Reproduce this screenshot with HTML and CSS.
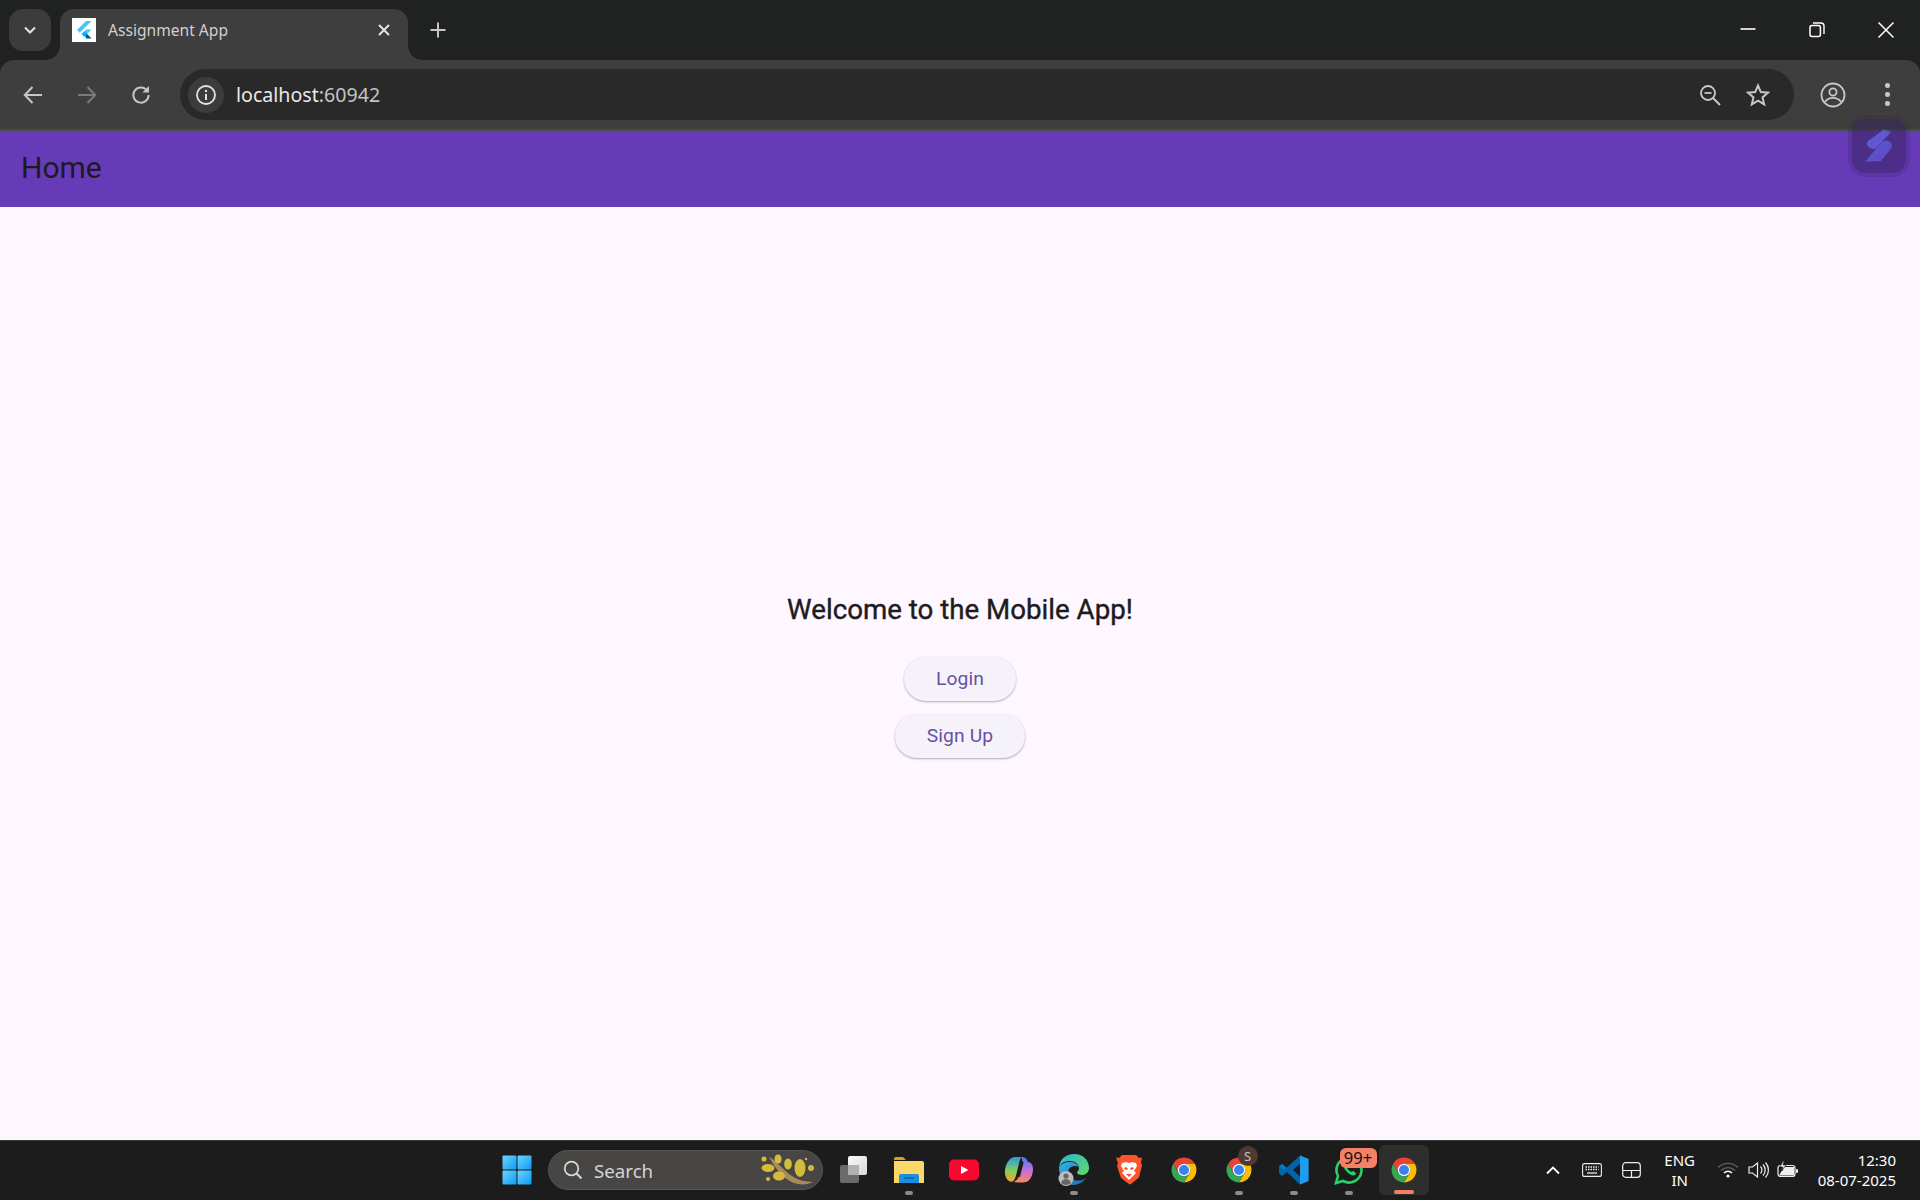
FILE: index.html
```html
<!DOCTYPE html>
<html lang="en">
<head>
<meta charset="utf-8">
<title>Assignment App</title>
<link rel="stylesheet" href="styles.css">
</head>
<body>
<svg class="defs" width="0" height="0" aria-hidden="true">
  <defs>
    <symbol id="chrome" viewBox="0 0 48 48">
      <path fill="#ea4335" d="M24 4A20 20 0 0 1 41.32 14H24A10 10 0 0 0 15.34 29L6.68 14A20 20 0 0 1 24 4Z"/>
      <path fill="#fbbc04" d="M41.32 14A20 20 0 0 1 24 44L32.66 29A10 10 0 0 0 24 14H41.32Z"/>
      <path fill="#34a853" d="M6.68 14A20 20 0 0 0 24 44L32.66 29A10 10 0 0 1 15.34 29Z"/>
      <circle cx="24" cy="24" r="10" fill="#fff"/>
      <circle cx="24" cy="24" r="8" fill="#3b82f0"/>
    </symbol>
    <linearGradient id="win" x1="0" y1="0" x2="1" y2="1">
      <stop offset="0" stop-color="#6fd3fb"/><stop offset="1" stop-color="#0a9bf5"/>
    </linearGradient>
    <linearGradient id="tv" x1="0" y1="0" x2="1" y2="1">
      <stop offset="0" stop-color="#fafafa"/><stop offset="1" stop-color="#d8d8d8"/>
    </linearGradient>
    <linearGradient id="edge" x1="0" y1="0" x2="1" y2="1">
      <stop offset="0" stop-color="#36b4e4"/><stop offset="1" stop-color="#1469b8"/>
    </linearGradient>
    <linearGradient id="edge2" x1="0" y1="0" x2="1" y2="1">
      <stop offset="0" stop-color="#2bb4d8"/><stop offset="1" stop-color="#62dc62"/>
    </linearGradient>
    <linearGradient id="cop1" x1="0" y1="0" x2="0" y2="1">
      <stop offset="0" stop-color="#2b9ae8"/><stop offset=".55" stop-color="#7fd05a"/><stop offset="1" stop-color="#f8a22e"/>
    </linearGradient>
    <linearGradient id="cop2" x1="0" y1="0" x2="0" y2="1">
      <stop offset="0" stop-color="#3f7ff0"/><stop offset=".5" stop-color="#c06ee0"/><stop offset="1" stop-color="#f88a5a"/>
    </linearGradient>
    <linearGradient id="s1" x1="0" y1="0" x2="1" y2="1">
      <stop offset="0" stop-color="#5560d8"/><stop offset="1" stop-color="#6a4fcf"/>
    </linearGradient>
  </defs>
</svg>

<header class="browser">
  <div class="tabstrip">
    <button class="tabsearch">
      <svg width="16" height="16" viewBox="0 0 16 16"><path d="M3 5.500 8 10.500 13 5.500" fill="none" stroke="#e3e3e3" stroke-width="2"/></svg>
    </button>
    <div class="tab">
      <span class="favicon">
        <svg width="24" height="24" viewBox="0 0 24 24">
          <path fill="#47c5fb" d="M14 3 5 12l2.700 2.700L19.500 3Z"/>
          <path fill="#47c5fb" d="M19.500 11.500h-5.400L9.700 16l2.700 2.700Z"/>
          <path fill="#00569e" d="m12.400 15.400 2-.1 5.200 5.200h-5.400Z"/>
          <path fill="#00b5f8" d="M9.700 16l2.700-2.700 2.700 2.700-2.700 2.700Z"/>
        </svg>
      </span>
      <span class="tabtitle">Assignment App</span>
      <svg class="tabclose" width="14" height="14" viewBox="0 0 14 14"><path d="M2 2 12 12M12 2 2 12" stroke="#e3e3e3" stroke-width="2"/></svg>
    </div>
    <svg class="newtab" width="18" height="18" viewBox="0 0 18 18"><path d="M9 1.500v15M1.500 9h15" stroke="#c7c7c7" stroke-width="2"/></svg>
    <div class="winctl">
      <span class="winbtn"><svg width="16" height="16" viewBox="0 0 16 16"><path d="M.5 7h15" stroke="#fff" stroke-width="1.600"/></svg></span>
      <span class="winbtn"><svg width="16" height="16" viewBox="0 0 16 16"><rect x="1" y="3.600" width="10.400" height="11" rx="2" fill="none" stroke="#fff" stroke-width="1.500"/><path d="M4 1h8a3 3 0 0 1 3 3v8" fill="none" stroke="#fff" stroke-width="1.400"/></svg></span>
      <span class="winbtn"><svg width="16" height="16" viewBox="0 0 16 16"><path d="M.5.500l15 15M15.500.500l-15 15" stroke="#fff" stroke-width="1.500"/></svg></span>
    </div>
  </div>
  <div class="toolbar">
    <span class="navbtn"><svg width="22" height="22" viewBox="0 0 22 22"><path d="M20 11H3M10.500 3 2.800 11l7.700 8" fill="none" stroke="#c7c7c7" stroke-width="2"/></svg></span>
    <span class="navbtn"><svg width="22" height="22" viewBox="0 0 22 22"><path d="M2 11h17M11.500 3l7.700 8-7.700 8" fill="none" stroke="#7a7a7a" stroke-width="2"/></svg></span>
    <span class="navbtn"><svg width="22" height="22" viewBox="0 0 22 22"><path d="M18.600 11a7.600 7.600 0 1 1-2.300-5.400" fill="none" stroke="#c7c7c7" stroke-width="2"/><path d="M19 2v6.500h-6.500Z" fill="#c7c7c7"/></svg></span>
    <div class="omnibox">
      <span class="siteinfo"><svg width="22" height="22" viewBox="0 0 22 22"><circle cx="11" cy="11" r="9" fill="none" stroke="#e3e3e3" stroke-width="1.800"/><path d="M11 10v6" stroke="#e3e3e3" stroke-width="2"/><circle cx="11" cy="7" r="1.200" fill="#e3e3e3"/></svg></span>
      <span class="url">localhost<span class="port">:60942</span></span>
      <span class="omni-icons">
        <svg width="22" height="22" viewBox="0 0 22 22"><circle cx="9" cy="9" r="7" fill="none" stroke="#c7c7c7" stroke-width="1.800"/><path d="M5.500 9h7" stroke="#c7c7c7" stroke-width="1.800"/><path d="m14 14 7 7" stroke="#c7c7c7" stroke-width="2"/></svg>
        <svg width="24" height="24" viewBox="0 0 24 24"><path d="m12 2.500 2.800 6.600 7.200.6-5.500 4.700 1.700 7-6.200-3.700-6.200 3.700 1.700-7L2 9.700l7.200-.6Z" fill="none" stroke="#c7c7c7" stroke-width="2"/></svg>
      </span>
    </div>
    <span class="account"><svg width="26" height="26" viewBox="0 0 26 26"><circle cx="13" cy="13" r="11.500" fill="none" stroke="#c7c7c7" stroke-width="1.800"/><circle cx="13" cy="10" r="3.600" fill="none" stroke="#c7c7c7" stroke-width="1.800"/><path d="M5 20c2-3.400 5-4.200 8-4.200s6 .8 8 4.200" fill="none" stroke="#c7c7c7" stroke-width="1.800"/></svg></span>
    <span class="menu"><i></i><i></i><i></i></span>
  </div>
</header>

<div class="appbar">
  <h1 class="apptitle">Home</h1>
</div>

<div class="widget">
  <svg width="28" height="36" viewBox="0 0 30 36">
    <path fill="#4f7f8f" opacity=".5" d="M19 0 28 2 24 8 16 4Z"/>
    <path fill="url(#s1)" d="M19 1.500 27.500 3 12.500 19.500c-2 2-5 2-7.500.5-3-2-3.800-5-1.500-7.500Z"/>
    <path fill="url(#s1)" d="M18 14c2.500-2.500 6-2.500 8.500-.5 3 2.300 3 5.500.8 8L17 34 0 35 18 14Z" opacity=".85"/>
  </svg>
</div>

<main class="page">
  <h2 class="welcome">Welcome to the Mobile App!</h2>
  <button class="pill">Login</button>
  <button class="pill">Sign Up</button>
</main>

<footer class="taskbar">
  <span class="start">
    <svg width="30" height="30" viewBox="0 0 30 30"><rect x="0.500" y="0.500" width="14" height="14" rx="1" fill="url(#win)"/><rect x="15.500" y="0.500" width="14" height="14" rx="1" fill="url(#win)"/><rect x="0.500" y="15.500" width="14" height="14" rx="1" fill="url(#win)"/><rect x="15.500" y="15.500" width="14" height="14" rx="1" fill="url(#win)"/></svg>
  </span>
  <div class="searchbox">
    <svg width="20" height="20" viewBox="0 0 20 20"><circle cx="8.500" cy="8.500" r="6.800" fill="none" stroke="#d8d8d8" stroke-width="1.800"/><path d="m13.500 13.500 5 5" stroke="#d8d8d8" stroke-width="2"/></svg>
    <span class="searchtext">Search</span>
    <svg class="branch" width="54" height="32" viewBox="0 0 54 32">
      <path d="M8 3c8 4 14 13 23 19s14 5 21 6c-6 3-13 3-19 1C22 25 14 14 8 3Z" fill="#a98a5e"/>
      <g fill="#d5bb3c">
        <ellipse cx="7" cy="14" rx="6.500" ry="4"/><ellipse cx="17" cy="5" rx="3.500" ry="4.500"/><ellipse cx="27" cy="10" rx="3.800" ry="5.500"/>
        <ellipse cx="39" cy="14" rx="5.500" ry="9"/><ellipse cx="18" cy="22" rx="6" ry="4.500"/><circle cx="50" cy="14" r="3"/><circle cx="7" cy="25" r="2"/><circle cx="3" cy="5" r="2.500"/><circle cx="45" cy="5" r="1.200"/>
      </g>
    </svg>
  </div>

  <div class="apps">
    <span class="app">
      <svg width="28" height="28" viewBox="0 0 28 28"><rect x="0" y="9" width="19" height="18" rx="2" fill="#6b6b6b"/><rect x="8" y="0" width="19" height="19" rx="2" fill="url(#tv)"/><rect x="8" y="9" width="11" height="10" fill="#b0b0b0"/></svg>
    </span>
    <span class="app on">
      <svg width="30" height="28" viewBox="0 0 30 28"><path d="M0 3a2 2 0 0 1 2-2h7l3 3h-12Z" fill="#d9a315"/><path d="M0 5h28a2 2 0 0 1 2 2v20H0Z" fill="#fcd769"/><path d="M5 27v-7a2 2 0 0 1 2-2h16a2 2 0 0 1 2 2v7Z" fill="#1a8fdc"/><path d="M10 22h10" stroke="#0b5aa5" stroke-width="1.500"/></svg>
    </span>
    <span class="app">
      <svg width="30" height="22" viewBox="0 0 30 22"><rect width="30" height="21" y="0.500" rx="5" fill="#f8072e"/><path d="m12 7 7.500 4-7.500 4Z" fill="#fff"/></svg>
    </span>
    <span class="app">
      <svg width="30" height="30" viewBox="0 0 30 30">
        <path fill="url(#cop2)" d="M18 2c3 0 5 2 6 5 3 0 5 3 5 7 0 6-3 12-7 13-2 .5-4 .5-7 .5l-6-.5c3-1 5-3 6-6l3-12c.5-3 0-5-.5-7Z"/>
        <path fill="url(#cop1)" d="M18 2h-7C6 2 2 8 1 15c-.5 5 1 10 5 11.500 3 1 5-2 6-6l3-12c.5-3 1-5 3-6.500Z"/>
        <path d="M18.500 7.500 15 21" fill="none" stroke="#1c1c1c" stroke-width="2.200" stroke-linecap="round"/>
      </svg>
    </span>
    <span class="app on">
      <svg width="32" height="34" viewBox="0 0 32 34">
        <path fill="url(#edge2)" d="M1 14C2 6 8 1 16 1c9 0 15 6 15 14 0 4-3 7-7 7-3 0-5-1-5-3 1-1 2-2 2-4 0-4-4-7-9-7-5 0-9 2-11 6Z"/>
        <path fill="url(#edge)" d="M1 14c2-3 6-5 11-5 4 0 8 2 9 5-4-2-8-1-10 2-2 4 0 9 5 11 3 1 8 1 12-2-3 4-7 7-13 7C7 32 1 25 1 14Z"/>
        <circle cx="8" cy="25.500" r="7.500" fill="#bdbdbd"/><circle cx="8" cy="23" r="2.600" fill="#666"/><path d="M3 30c1-3 3-4 5-4s4 1 5 4a7 7 0 0 1-10 0Z" fill="#666"/>
      </svg>
    </span>
    <span class="app">
      <svg width="26" height="30" viewBox="0 0 26 30"><path fill="#fb542b" d="M6 0h14l3 3 3-.5-1 5 1 3-3 12-8 6.500-1 .5-1-.5L5 23 1 11l1-3-2-5.500L3 3Z"/><path fill="#fff" d="M6 8 10 7l3 1 3-1 4 1 1 3-3 5 2 2-4 4-3 3-3-3-4-4 2-2-3-5Z"/><path fill="#fb542b" d="M9 12l3 1-1 2-3-1ZM17 12l-3 1 1 2 3-1ZM10 19h6l-3 3Z"/></svg>
    </span>
    <span class="app"><svg width="30" height="30"><use href="#chrome"/></svg></span>
    <span class="app on">
      <svg width="30" height="30"><use href="#chrome"/></svg>
      <span class="badge-s">S</span>
    </span>
    <span class="app on">
      <svg width="30" height="30" viewBox="0 0 30 30"><path fill="#0065a9" d="M21 .5 29.500 4v22L21 29.500 8 17l-5 4-3-2.500v-7L3 9l5 4Zm0 8-7 6.500 7 6.500Z"/><path fill="#1f9cf0" d="M21 .5 29.500 4v22L21 29.500Z"/><path fill="#007acc" d="M21 .5 8 13l-5-4-3 2.500 5 3.500 16-14.500Z"/></svg>
    </span>
    <span class="app on">
      <svg width="30" height="30" viewBox="0 0 30 30"><path d="M2 28l2-7A12.500 12.500 0 1 1 9 26Z" fill="none" stroke="#25d366" stroke-width="2.600"/><path d="M10 9c-1 2 0 5 3 8s6 4 8 3l1-2-3-2-1.500 1c-2-.5-4-3-4.500-4.500l1-1.500-2-3Z" fill="#25d366"/></svg>
      <span class="badge-n">99+</span>
    </span>
    <span class="app active"><svg width="30" height="30"><use href="#chrome"/></svg></span>
  </div>

  <div class="tray">
    <svg class="t-caret" width="16" height="10" viewBox="0 0 16 10"><path d="M2 8.500 8 2.500l6 6" fill="none" stroke="#fff" stroke-width="1.800"/></svg>
    <svg class="t-kbd" width="20" height="14" viewBox="0 0 20 14"><rect x=".6" y=".6" width="18.800" height="12.800" rx="2" fill="none" stroke="#eee" stroke-width="1.100"/><path d="M3.500 4h13M3.500 6.500h13" stroke="#eee" stroke-width="1.300" stroke-dasharray="1.500 1"/><path d="M5 10h10" stroke="#eee" stroke-width="1.300"/></svg>
    <svg class="t-pad" width="20" height="16" viewBox="0 0 20 16"><rect x=".7" y=".7" width="17.600" height="14.600" rx="3" fill="none" stroke="#eee" stroke-width="1.200"/><path d="M1 8.500h17M9.500 8.500v6.500" stroke="#eee" stroke-width="1.200"/></svg>
    <span class="lang">ENG<br>IN</span>
    <svg class="t-wifi" width="22" height="16" viewBox="0 0 22 16"><path d="M1 5.500a14 14 0 0 1 20 0M4 8.500a10 10 0 0 1 14 0" fill="none" stroke="#5e5e5e" stroke-width="1.300"/><path d="M7 11a5.500 5.500 0 0 1 8 0" fill="none" stroke="#fff" stroke-width="1.300"/><circle cx="11" cy="14" r="1.600" fill="#fff"/></svg>
    <svg class="t-vol" width="22" height="18" viewBox="0 0 22 18"><path d="M1 6h3.500L9.500 2v14l-5-4H1Z" fill="none" stroke="#eee" stroke-width="1.200"/><path d="M12.500 5.500a5 5 0 0 1 0 7M15 3.500a8 8 0 0 1 0 11M17.500 1.500a11 11 0 0 1 0 15" fill="none" stroke="#eee" stroke-width="1.200"/></svg>
    <svg class="t-bat" width="22" height="18" viewBox="0 0 22 18"><rect x="1" y="4.500" width="17" height="11" rx="2.500" fill="none" stroke="#eee" stroke-width="1.200"/><path d="M2 14.500 7 6h10v8.500Z" fill="#eee"/><rect x="19" y="8" width="2" height="4" rx="1" fill="#eee"/><path d="M6 0 3 6h3l-1 4 4-6H6l1-4Z" fill="#eee" stroke="#1c1c1c" stroke-width=".6"/></svg>
    <span class="clock">12:30<br>08-07-2025</span>
  </div>
</footer>
</body>
</html>
```

FILE: styles.css
```css
* { box-sizing: border-box; }
html, body { margin: 0; height: 100%; }
body {
  display: flex;
  flex-direction: column;
  height: 1200px;
  overflow: hidden;
  background: #fef7ff;
  font-family: "Noto Sans", "Open Sans", sans-serif;
  position: relative;
}
.defs { position: absolute; }

/* browser frame */
.browser { flex: none; background: #202221; }
.tabstrip {
  height: 60px;
  display: flex;
  align-items: flex-end;
  padding-left: 9px;
}
.tabsearch {
  width: 42px;
  height: 42px;
  margin-bottom: 9px;
  border: 0;
  padding: 0;
  border-radius: 14px;
  background: #3c3c3c;
  display: flex;
  align-items: center;
  justify-content: center;
}
.tab {
  position: relative;
  width: 348px;
  height: 51px;
  margin-left: 9px;
  padding: 0 17px 9px 12px;
  background: #3e3e3e;
  border-radius: 14px 14px 0 0;
  display: flex;
  align-items: center;
}
.tab::before, .tab::after {
  content: "";
  position: absolute;
  bottom: 0;
  width: 14px;
  height: 14px;
}
.tab::before { left: -14px; background: radial-gradient(circle at 0 0, transparent 13.5px, #3e3e3e 14px); }
.tab::after { right: -14px; background: radial-gradient(circle at 100% 0, transparent 13.5px, #3e3e3e 14px); }
.favicon {
  width: 24px;
  height: 24px;
  background: #fff;
  display: block;
  flex: none;
}
.favicon svg { display: block; }
.tabtitle {
  margin: 0 0 1px 12px;
  flex: 1;
  font-size: 15.600px;
  line-height: 22px;
  color: #d0d0d0;
  white-space: nowrap;
}
.tabclose { flex: none; }
.newtab { margin: 0 0 21px 21px; flex: none; }
.winctl {
  margin-left: auto;
  align-self: stretch;
  display: flex;
}
.winbtn {
  width: 69px;
  display: flex;
  align-items: center;
  justify-content: center;
}

.toolbar {
  height: 69px;
  background: #3e3e3e;
  border-radius: 14px 14px 0 0;
  display: flex;
  align-items: center;
  padding-left: 6px;
}
.navbtn {
  width: 54px;
  display: flex;
  align-items: center;
  justify-content: center;
  flex: none;
}
.omnibox {
  width: 1614px;
  margin-left: 12px;
  height: 51px;
  border-radius: 26px;
  background: #292929;
  display: flex;
  align-items: center;
  padding: 0 24px 0 8px;
  flex: none;
}
.siteinfo {
  width: 36px;
  height: 36px;
  border-radius: 50%;
  background: #3c3c3c;
  display: flex;
  align-items: center;
  justify-content: center;
}
.url {
  margin-left: 12px;
  font-size: 19.600px;
  color: #e8e8e8;
}
.port { color: #c4c4c4; }
.omni-icons {
  margin-left: auto;
  display: flex;
  align-items: center;
  gap: 25px;
}
.account {
  margin-left: 26px;
  display: flex;
}
.menu {
  margin-left: 39px;
  display: flex;
  flex-direction: column;
  gap: 4.500px;
}
.menu i {
  width: 4.500px;
  height: 4.500px;
  border-radius: 50%;
  background: #c7c7c7;
  display: block;
}

/* app */
.appbar {
  flex: none;
  height: 78px;
  background: #673ab7;
  border-top: 2px solid #4a4a4a;
  padding: 0 0 4px 21px;
  display: flex;
  align-items: center;
}
.apptitle {
  margin: 0;
  font: 400 30px "Roboto", sans-serif;
  color: #1d1b20;
}
.widget {
  position: absolute;
  left: 1848px;
  top: 115px;
  width: 62px;
  height: 62px;
  border-radius: 18px;
  background: rgba(50, 34, 90, .5);
  background-clip: padding-box;
  border: 4px solid rgba(50, 34, 90, .2);
  display: flex;
  align-items: center;
  justify-content: center;
}

.page {
  flex: 1;
  min-height: 0;
  padding-top: 2px;
  display: flex;
  flex-direction: column;
  align-items: center;
  justify-content: center;
}
.welcome {
  margin: 0 0 29px;
  font: 400 27.700px/36px "Roboto", sans-serif;
  -webkit-text-stroke: .4px #1d1b20;
  color: #1d1b20;
}
.pill {
  height: 44px;
  padding: 0 31.500px;
  margin-bottom: 13px;
  border: 0;
  border-radius: 22px;
  background: #f6f2fa;
  color: #6750a4;
  font: 400 19.250px "Roboto", sans-serif;
  letter-spacing: .14px;
  box-shadow: 0 1px 2px rgba(0,0,0,.25), 0 1px 3px rgba(0,0,0,.08);
}
.pill:last-child { margin-bottom: 0; }

/* taskbar */
.taskbar {
  flex: none;
  height: 60px;
  background: #1c1c1c;
  border-top: 1px solid #3a3a3a;
  display: flex;
  align-items: center;
  padding: 0 0 2px 492px;
}
.start {
  width: 50px;
  display: flex;
  justify-content: center;
  flex: none;
}
.searchbox {
  width: 275px;
  height: 40px;
  margin-left: 6px;
  border-radius: 20px;
  background: #484644;
  border: 1px solid #555;
  display: flex;
  align-items: center;
  padding: 0 7px 0 14px;
  flex: none;
}
.searchtext {
  margin: 1px 0 0 11px;
  font-size: 18.700px;
  color: #d4d4d4;
}
.branch { margin-left: auto; }
.apps {
  display: flex;
  margin-left: 3.500px;
}
.app {
  position: relative;
  width: 55px;
  height: 50px;
  display: flex;
  align-items: center;
  justify-content: center;
  flex: none;
}
.app.on::after {
  content: "";
  position: absolute;
  bottom: 0;
  left: 50%;
  margin-left: -4px;
  width: 8px;
  height: 4px;
  border-radius: 2px;
  background: #8c8c8c;
}
.app.active { width: 50px; margin-left: 2.500px; background: #2e2e2c; border-radius: 6px; }
.app.active::after {
  content: "";
  position: absolute;
  bottom: 1px;
  left: 15px;
  width: 20px;
  height: 4px;
  border-radius: 2px;
  background: #f28068;
}
.badge-s {
  position: absolute;
  left: 26px;
  top: 1px;
  width: 20px;
  height: 20px;
  border-radius: 50%;
  background: #4e3a32;
  color: #c9c0bb;
  font-size: 13px;
  line-height: 20px;
  text-align: center;
}
.badge-n {
  position: absolute;
  left: 18px;
  top: 3px;
  width: 37px;
  height: 20px;
  border-radius: 6px;
  background: #f58068;
  color: #111;
  font-size: 16.500px;
  line-height: 20px;
  text-align: center;
}

.tray {
  margin-left: auto;
  display: flex;
  align-items: center;
  color: #fff;
  padding-right: 24px;
}
.t-kbd { margin-left: 21px; }
.t-pad { margin-left: 20px; }
.lang {
  margin-left: 13px;
  width: 50px;
  text-align: center;
  font-size: 15px;
  line-height: 20px;
}
.t-wifi { margin-left: 12px; }
.t-vol { margin-left: 9px; }
.t-bat { margin-left: 7px; }
.clock {
  margin-left: 19px;
  text-align: right;
  font-size: 15px;
  line-height: 20px;
}
```
